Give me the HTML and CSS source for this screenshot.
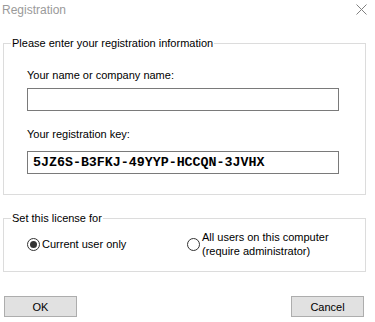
FILE: index.html
```html
<!DOCTYPE html>
<html>
<head>
<meta charset="utf-8">
<link rel="stylesheet" href="styles.css">
</head>
<body>
<div class="dialog">
  <div class="titlebar">
    <span class="title">Registration</span>
    <svg class="close" width="11" height="11" viewBox="0 0 11 11"><path d="M0.5 0.5 L10.5 10.5 M10.5 0.5 L0.5 10.5" stroke="#808080" stroke-width="1" fill="none"/></svg>
  </div>
  <fieldset class="group group-info">
    <legend>Please enter your registration information</legend>
    <div class="field-label first">Your name or company name:</div>
    <div class="textbox"></div>
    <div class="field-label second">Your registration key:</div>
    <div class="textbox key">5JZ6S-B3FKJ-49YYP-HCCQN-3JVHX</div>
  </fieldset>
  <fieldset class="group group-license">
    <legend>Set this license for</legend>
    <div class="radios">
      <label class="radio-option opt-current"><span class="radio checked"></span><span>Current user only</span></label>
      <label class="radio-option opt-all"><span class="radio"></span><span>All users on this computer<br>(require administrator)</span></label>
    </div>
  </fieldset>
  <div class="buttons">
    <button class="btn btn-ok">OK</button>
    <button class="btn btn-cancel">Cancel</button>
  </div>
</div>
</body>
</html>
```
FILE: styles.css
```css
* { box-sizing: border-box; }
html, body { margin: 0; padding: 0; background: #fff; }
body {
  font-family: "Liberation Sans", Arial, sans-serif;
  font-size: 11px;
  color: #000;
  width: 375px;
  height: 322px;
  overflow: hidden;
}
.dialog {
  display: flex;
  flex-direction: column;
}
.titlebar {
  height: 36px;
  display: flex;
  justify-content: space-between;
  align-items: flex-start;
  padding: 3px 8px 0 2px;
}
.title {
  font-size: 12px;
  color: #9a9a9a;
  line-height: 14px;
}
.close { margin-top: 1px; }
.group {
  margin: 0 9px 0 3px;
  border: 1px solid #dcdcdc;
  padding: 0 0 0 23px;
}
.group legend {
  padding: 0 1px;
  margin-left: -16px;
  line-height: 14px;
}
.group-info { padding-bottom: 20px; }
.field-label { line-height: 14px; }
.field-label.first { margin-top: 18px; margin-bottom: 6px; }
.field-label.second { margin-top: 16px; margin-bottom: 10px; }
.textbox {
  width: 312px;
  height: 23px;
  border: 1px solid #7a7a7a;
  background: #fff;
}
.textbox.key {
  font-family: "Liberation Mono", "Courier New", monospace;
  font-size: 13.3px;
  font-weight: bold;
  line-height: 21px;
  padding-left: 5px;
}
.group-license {
  margin-top: 16px;
  padding-bottom: 0;
  height: 61px;
}
.radios {
  display: flex;
  align-items: center;
  height: 38px;
}
.radio-option {
  display: flex;
  align-items: center;
  gap: 2px;
  line-height: 14px;
}
.opt-current { width: 160px; }
.radio {
  width: 13px;
  height: 13px;
  border: 1px solid #333;
  border-radius: 50%;
  display: flex;
  align-items: center;
  justify-content: center;
  flex: none;
}
.radio.checked::after {
  content: "";
  width: 7px;
  height: 7px;
  border-radius: 50%;
  background: #333;
}
.buttons {
  display: flex;
  justify-content: space-between;
  padding: 0 11px 0 4px;
  margin-top: 24px;
}
.btn {
  font-family: "Liberation Sans", Arial, sans-serif;
  font-size: 11px;
  width: 73px;
  height: 21px;
  background: #e1e1e1;
  border: 1px solid #adadad;
  padding: 0;
  color: #000;
}
```
